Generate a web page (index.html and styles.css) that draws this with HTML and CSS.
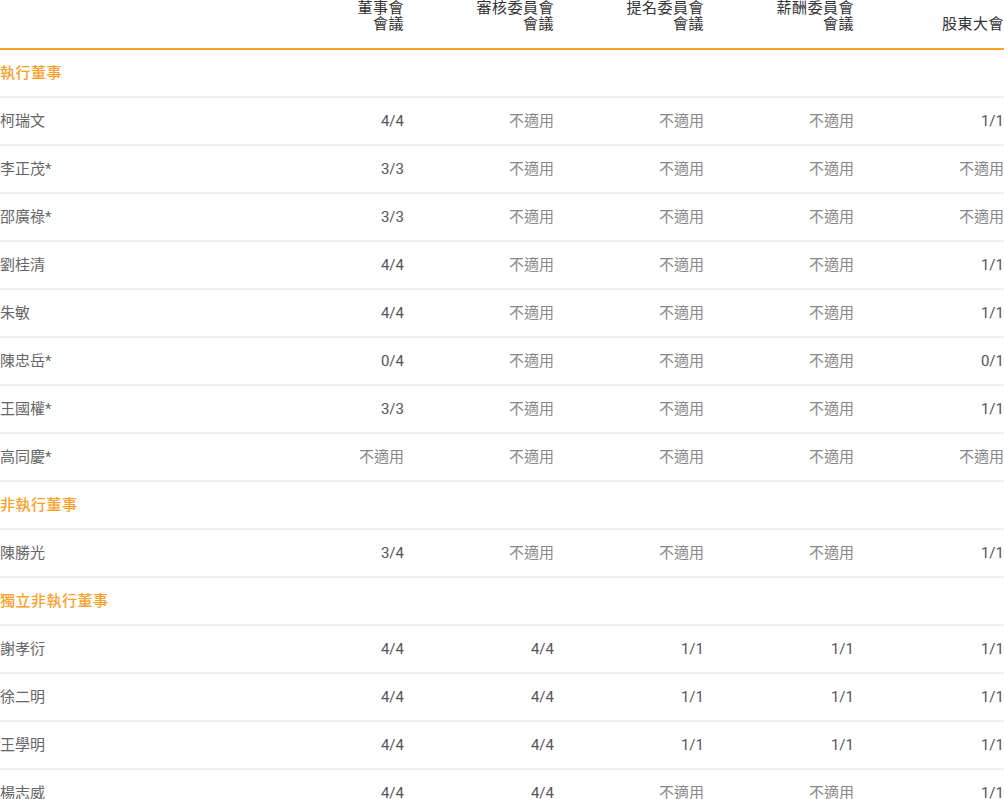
FILE: index.html
```html
<!DOCTYPE html>
<html lang="zh-Hant">
<head>
<meta charset="utf-8">
<link rel="stylesheet" href="styles.css">
</head>
<body>
<table class="att">
  <colgroup>
    <col class="c-name"><col class="c-num"><col class="c-num"><col class="c-num"><col class="c-num"><col class="c-num">
  </colgroup>
  <thead>
    <tr>
      <th></th>
      <th>董事會<br>會議</th>
      <th>審核委員會<br>會議</th>
      <th>提名委員會<br>會議</th>
      <th>薪酬委員會<br>會議</th>
      <th>股東大會</th>
    </tr>
  </thead>
  <tbody>
    <tr class="sec"><td colspan="6">執行董事</td></tr>
    <tr><td>柯瑞文</td><td>4/4</td><td class="na">不適用</td><td class="na">不適用</td><td class="na">不適用</td><td>1/1</td></tr>
    <tr><td>李正茂*</td><td>3/3</td><td class="na">不適用</td><td class="na">不適用</td><td class="na">不適用</td><td class="na">不適用</td></tr>
    <tr><td>邵廣祿*</td><td>3/3</td><td class="na">不適用</td><td class="na">不適用</td><td class="na">不適用</td><td class="na">不適用</td></tr>
    <tr><td>劉桂清</td><td>4/4</td><td class="na">不適用</td><td class="na">不適用</td><td class="na">不適用</td><td>1/1</td></tr>
    <tr><td>朱敏</td><td>4/4</td><td class="na">不適用</td><td class="na">不適用</td><td class="na">不適用</td><td>1/1</td></tr>
    <tr><td>陳忠岳*</td><td>0/4</td><td class="na">不適用</td><td class="na">不適用</td><td class="na">不適用</td><td>0/1</td></tr>
    <tr><td>王國權*</td><td>3/3</td><td class="na">不適用</td><td class="na">不適用</td><td class="na">不適用</td><td>1/1</td></tr>
    <tr><td>高同慶*</td><td class="na">不適用</td><td class="na">不適用</td><td class="na">不適用</td><td class="na">不適用</td><td class="na">不適用</td></tr>
    <tr class="sec"><td colspan="6">非執行董事</td></tr>
    <tr><td>陳勝光</td><td>3/4</td><td class="na">不適用</td><td class="na">不適用</td><td class="na">不適用</td><td>1/1</td></tr>
    <tr class="sec"><td colspan="6">獨立非執行董事</td></tr>
    <tr><td>謝孝衍</td><td>4/4</td><td>4/4</td><td>1/1</td><td>1/1</td><td>1/1</td></tr>
    <tr><td>徐二明</td><td>4/4</td><td>4/4</td><td>1/1</td><td>1/1</td><td>1/1</td></tr>
    <tr><td>王學明</td><td>4/4</td><td>4/4</td><td>1/1</td><td>1/1</td><td>1/1</td></tr>
    <tr><td>楊志威</td><td>4/4</td><td>4/4</td><td class="na">不適用</td><td class="na">不適用</td><td>1/1</td></tr>
  </tbody>
</table>
</body>
</html>
```

FILE: styles.css
```css
html, body {
  margin: 0;
  padding: 0;
  background: #fff;
}
body {
  font-family: Roboto, "Noto Sans CJK TC", "Noto Sans", sans-serif;
  font-size: 15px;
  color: #666;
}
.att {
  width: 1004px;
  table-layout: fixed;
  border-collapse: separate;
  border-spacing: 0;
}
.c-name { width: 254px; }
.c-num { width: 150px; }
.att th {
  height: 32px;
  padding: 0 0 16px 0;
  vertical-align: bottom;
  text-align: right;
  font-weight: normal;
  font-size: 15px;
  line-height: 16px;
  letter-spacing: 0.5px;
  color: #333;
  border-bottom: 2px solid #f9a12b;
}
.att td {
  height: 46px;
  padding: 0;
  vertical-align: middle;
  text-align: right;
  line-height: 16px;
  color: #555;
  border-bottom: 2px solid #eeeeee;
}
.att td:first-child {
  text-align: left;
  color: #666;
}
.att td.na {
  color: #888;
}
.att tr.sec td {
  color: #f9a12b;
  font-weight: 500;
  letter-spacing: 0.5px;
}
```
